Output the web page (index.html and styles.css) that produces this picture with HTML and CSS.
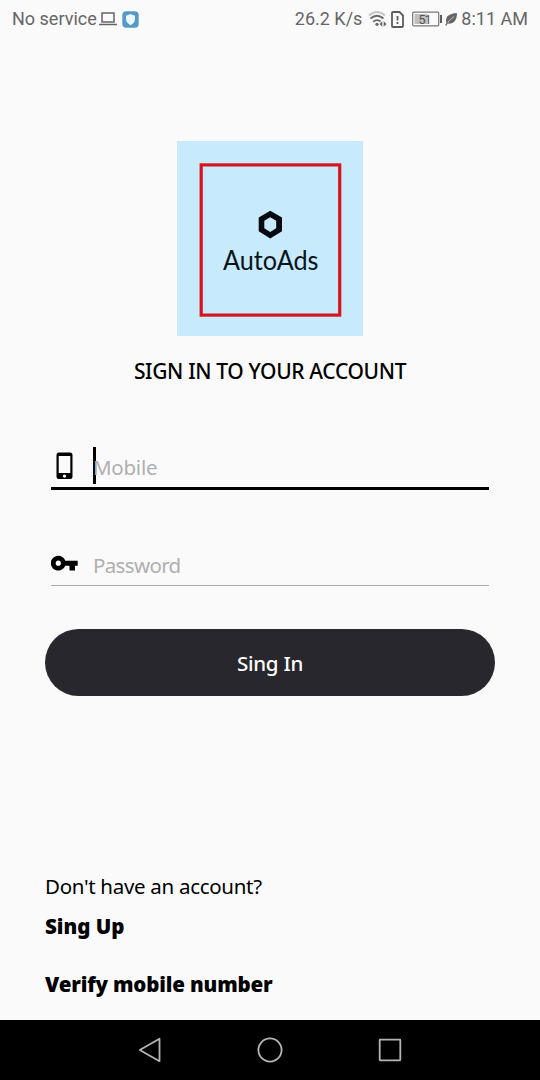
FILE: index.html
```html
<!DOCTYPE html>
<html lang="en">
<head>
<meta charset="utf-8">
<title>AutoAds</title>
<link rel="stylesheet" href="styles.css">
</head>
<body>
<div class="screen">
  <header class="status">
    <span class="carrier">No service</span>
    <svg class="laptop" width="18" height="16" viewBox="0 0 18 16" fill="none" stroke="#666" stroke-width="1.5"><path d="M3 2h12v9H3zM0 13.5h18"/></svg>
    <svg class="shield" width="17" height="17" viewBox="0 0 17 17"><rect x=".3" y=".3" width="16.4" height="16.4" rx="4" fill="#5599c8"/><path d="M8.5 3 13 4.700v3.600c0 2.800-2 4.700-4.500 5.900C6 13 4 11.100 4 8.300V4.700z" fill="#e9f7fe"/></svg>
    <span class="speed">26.2 K/s</span>
    <svg class="wifi" width="20" height="18" viewBox="0 0 20 18" fill="none" stroke-width="1.800"><path d="M1 5.500Q9 -1.500 17 5.500" stroke="#c4c4c4"/><path d="M2.500 8.500Q9 3 15.500 8.500M5.200 11.700Q9 8.600 12.500 11.500" stroke="#666"/><circle cx="9" cy="14.300" r="1.600" fill="#666"/><path d="m14.300 11.300-2.800 2.700 2.800 2.700zM15.700 11.300v5.400l2.800-2.700z" fill="#666"/></svg>
    <svg class="sim" width="13" height="17" viewBox="0 0 13 17"><path d="M2 1h6.500L12 4.500V15q0 1-1 1H2q-1 0-1-1V2q0-1 1-1z" fill="none" stroke="#5c5c5c" stroke-width="1.800" stroke-linejoin="round"/><path d="M6.500 5v4.500M6.500 11v2" stroke="#5c5c5c" stroke-width="1.800"/></svg>
    <svg class="battery" width="30" height="16" viewBox="0 0 30 16"><rect x=".7" y="1.200" width="26" height="13.600" rx="1" fill="none" stroke="#777" stroke-width="1.200"/><path d="M2.500 3h13v10h-13z" fill="#bebebe"/><path d="M29 4v8" stroke="#5c5c5c" stroke-width="2"/><text x="6.500" y="12.500" textLength="13">51</text></svg>
    <svg class="leaf" width="13" height="14" viewBox="0 0 13 14"><path d="M12 1C5 1.500 1 4 1 8.500 1 10 1.500 11 2.300 11.600 8 12.500 12 9 12 1z" fill="#666"/><path d="M9 4.500Q4 7.500 1 13.500" fill="none" stroke="#fafafa" stroke-width=".6"/><path d="M2.500 10.500.7 13.500" stroke="#666" stroke-width="1.400"/></svg>
    <span class="clock">8:11 AM</span>
  </header>

  <main class="content">
    <svg class="logo" width="186" height="195" viewBox="0 0 186 195">
      <rect width="186" height="195" fill="#c7eafd"/>
      <rect x="24.200" y="23.900" width="138.500" height="150.200" fill="none" stroke="#d7141e" stroke-width="3.200"/>
      <path d="M93.200 69.700 105 76.500v13.800l-11.800 7.100-11.500-7.100V76.500zM93.200 76.200l-5.900 3.500v7.600l5.900 3.700 6-3.700v-7.600z" fill="#050b10" fill-rule="evenodd"/>
      <text x="46" y="128.500" textLength="95.500" lengthAdjust="spacingAndGlyphs">AutoAds</text>
    </svg>
    <h1 class="title">SIGN IN TO YOUR ACCOUNT</h1>
    <form class="form">
      <div class="field field-active">
        <svg class="field-icon" width="27" height="28" viewBox="0 0 27 28"><path fill-rule="evenodd" d="M8 .5h11q2.500 0 2.500 2.500v21.500q0 2.500-2.500 2.500H8q-2.500 0-2.500-2.500V3Q5.500.5 8 .5zM7.700 4v17h11.600V4zM13.500 22.400a1.700 1.700 0 1 0 0 3.400 1.700 1.700 0 0 0 0-3.400z"/></svg>
        <span class="caret"></span><span class="hint mobile">Mobile</span>
      </div>
      <div class="field">
        <svg class="field-icon key" width="27" height="28" viewBox="0 0 27 28"><path fill-rule="evenodd" d="M14.200 10.700A7.400 7.400 0 1 0 14.200 15.700H18.500V20.500H24V15.700H26.700V10.700zM7.300 10.600a2.600 2.600 0 1 1 0 5.200 2.600 2.600 0 0 1 0-5.200z"/></svg>
        <span class="hint">Password</span>
      </div>
      <button class="submit" type="button">Sing In</button>
    </form>
    <footer class="links">
      <span class="question">Don't have an account?</span>
      <span class="link signup">Sing Up</span>
      <span class="link verify">Verify mobile number</span>
    </footer>
  </main>

  <nav class="navbar">
    <svg width="28" height="28" viewBox="0 0 28 28"><path d="M23.500 2.800v22.400L3.800 14z"/></svg>
    <svg width="28" height="28" viewBox="0 0 28 28"><circle cx="14" cy="14" r="11.600"/></svg>
    <svg width="28" height="28" viewBox="0 0 28 28"><rect x="3.700" y="3.700" width="20.600" height="20.600" rx=".5"/></svg>
  </nav>
</div>
</body>
</html>
```
FILE: styles.css
```css
* { box-sizing: border-box; }
body { margin: 0; background: #fafafa; color: #000; font-family: "Noto Sans", sans-serif; }
svg { display: block; flex: none; }
.screen { display: flex; flex-direction: column; width: 540px; height: 1080px; overflow: hidden; }

.status { display: flex; align-items: center; height: 38px; padding: 0 12px; color: #666; font: 18px/38px Roboto, sans-serif; white-space: nowrap; }
.laptop { margin-left: 2px; }
.shield { margin-left: 5px; }
.speed { margin-left: auto; }
.wifi { margin-left: 6px; }
.sim { margin-left: 3px; }
.battery { margin-left: 8px; }
.battery text { font: 12.500px Roboto, sans-serif; fill: #555; }
.leaf { margin-left: 3px; }
.clock { margin-left: 3px; }

.content { display: flex; flex: 1; flex-direction: column; align-items: center; padding-top: 103px; }
.logo text { font: 27px Lato, sans-serif; fill: #07141b; }
.title { margin: 20px 0 0; font-size: 21px; line-height: 30px; font-weight: 500; letter-spacing: -.35px; white-space: nowrap; }

.form { display: flex; flex-direction: column; width: 450px; margin-top: 50px; }
.field { display: flex; align-items: center; height: 54px; margin: 0 6px; border-bottom: 1.500px solid #a8a8a8; }
.field-active { height: 54px; margin-bottom: 42px; border-bottom: 3px solid #000; }
.field-icon { margin-top: 8px; }
.key { margin-top: 10px; }
.caret { width: 3px; height: 37px; margin: 8px 0 0 15px; background: #000; }
.hint { margin: 12px 0 0 15px; color: #afafaf; font-size: 20.500px; line-height: 28px; letter-spacing: -.65px; }
.mobile { margin: 10px 0 0 -3px; letter-spacing: -.25px; }
.submit { height: 67px; margin-top: 43px; padding: 1px 0 0; border: 0; border-radius: 34px; background: #28272d; color: #fff; font: 500 20.500px/28px "Noto Sans", sans-serif; letter-spacing: -.25px; }

.links { display: flex; flex-direction: column; width: 450px; margin-top: 175px; font-size: 20.500px; line-height: 30px; }
.question { letter-spacing: -.3px; }
.link { font-weight: 900; }
.signup { margin-top: 10px; }
.verify { margin-top: 28px; letter-spacing: -.15px; }

.navbar { display: flex; justify-content: center; gap: 92px; align-items: center; height: 60px; background: #000; }
.navbar svg { fill: none; stroke: #b5b5b5; stroke-width: 1.800; stroke-linejoin: round; }
```
